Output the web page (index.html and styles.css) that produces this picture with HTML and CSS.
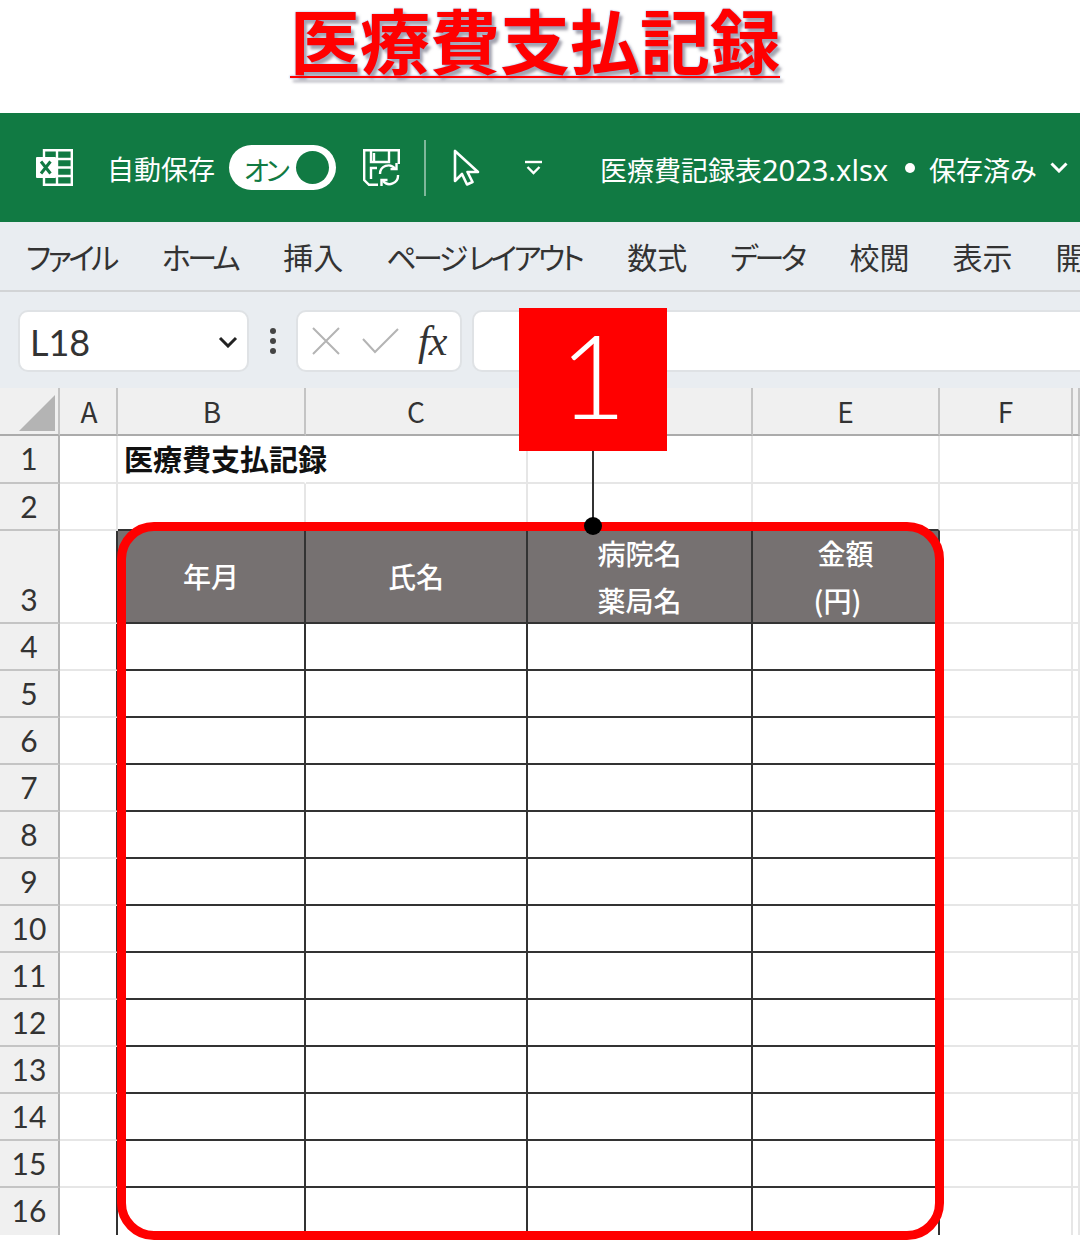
FILE: index.html
```html
<!DOCTYPE html>
<html lang="ja">
<head>
	<meta charset="UTF-8">
	<title>医療費支払記録</title>
	<link rel="stylesheet" href="styles.css">
</head>
<body>
	<div class="page">
		<h1 class="title"><span>医療費支払記録</span></h1>

		<div class="titlebar">
			<svg class="ico-excel" viewBox="0 0 37 37" fill="none" stroke="#fff" stroke-width="2.4">
				<path d="M8 8V1.2H35.8V35.8H8V28"/>
				<path d="M21 1.2V35.8M21 10H35.8M21 18.5H35.8M21 27H35.8"/>
				<rect x="0" y="8" width="20" height="21" rx="1" fill="#fff" stroke="none"/>
				<path d="M5 12.5L14.5 24.5M14.5 12.5L5 24.5" stroke="#117a43" stroke-width="3"/>
			</svg>
			<span class="autosave">自動保存</span>
			<div class="toggle">
				<span>オン</span>
				<i></i>
			</div>
			<svg class="ico-save" viewBox="0 0 37 37" fill="none" stroke="#fff" stroke-width="2.4">
				<path d="M15 35.8H6L1.2 31V1.2H35.8V15"/>
				<path d="M8 1.2V13H11V4M8 13H26V1.2M8 30V19H14"/>
				<path d="M17 25A8.5 8.5 0 0 1 32 19.5M35 26A8.5 8.5 0 0 1 20 32"/>
				<path d="M33.5 14V20H27.5M18.5 37V31H24.5"/>
			</svg>
			<div class="sep"></div>
			<svg class="ico-cursor" viewBox="0 0 27 37" fill="none" stroke="#fff" stroke-width="2.6" stroke-linejoin="round">
				<path d="M2 2V32L9 25L14 35.5L19.5 33L14.5 23H25Z"/>
			</svg>
			<svg class="ico-more" viewBox="0 0 17 15" fill="none" stroke="#fff" stroke-width="2.4">
				<path d="M0 2H17"/>
				<path d="M2.5 7L8.5 13L14.5 7"/>
			</svg>
			<span class="filename">医療費記録表<span class="ext">2023.xlsx</span></span>
			<i class="bullet"></i>
			<span class="saved">保存済み</span>
			<svg class="ico-down" viewBox="0 0 18 11" fill="none" stroke="#fff" stroke-width="3">
				<path d="M1.5 1.5L9 9L16.5 1.5"/>
			</svg>
		</div>

		<div class="tabs">
			<span class="kana">ファイル</span>
			<span class="kana">ホーム</span>
			<span>挿入</span>
			<span class="kana">ページ レイアウト</span>
			<span>数式</span>
			<span class="kana">データ</span>
			<span>校閲</span>
			<span>表示</span>
			<span>開発</span>
		</div>

		<div class="formulabar">
			<div class="namebox">
				<span>L18</span>
				<svg viewBox="0 0 20 12" fill="none" stroke="#222" stroke-width="3"><path d="M2 2L10 10L18 2"/></svg>
			</div>
			<div class="dots"><i></i><i></i><i></i></div>
			<div class="fxbox">
				<svg class="ico-x" viewBox="0 0 28 28" fill="none" stroke="#b4b4b4" stroke-width="2"><path d="M1 1L27 27M27 1L1 27"/></svg>
				<svg class="ico-check" viewBox="0 0 37 26" fill="none" stroke="#b4b4b4" stroke-width="2"><path d="M1 11L13 24L36 1"/></svg>
				<span class="fx">fx</span>
			</div>
			<div class="input"></div>
		</div>

		<div class="sheet">
			<div class="corner"><svg viewBox="0 0 36 36"><path d="M36 0V36H0Z" fill="#b4b4b4"/></svg></div>
			<div class="col nudge">A</div><div class="col nudge">B</div><div class="col">C</div><div class="col"></div><div class="col">E</div><div class="col">F</div><div class="col"></div>

			<div class="num">1</div><div class="c"></div><div class="c heading">医療費支払記録</div><div class="c"></div><div class="c"></div><div class="c"></div><div class="c"></div><div class="c"></div>
			<div class="num">2</div><div class="c"></div><div class="c b"></div><div class="c b"></div><div class="c b"></div><div class="c b"></div><div class="c"></div><div class="c"></div>
			<div class="num low">3</div><div class="c e"></div><div class="th">年月</div><div class="th">氏名</div><div class="th">病院名<br>薬局名</div><div class="th"><div>金額<br><span class="yen">(円)</span></div></div><div class="c"></div><div class="c"></div>
			<div class="num">4</div><div class="c e"></div><div class="t"></div><div class="t"></div><div class="t"></div><div class="t"></div><div class="c"></div><div class="c"></div>
			<div class="num">5</div><div class="c e"></div><div class="t"></div><div class="t"></div><div class="t"></div><div class="t"></div><div class="c"></div><div class="c"></div>
			<div class="num">6</div><div class="c e"></div><div class="t"></div><div class="t"></div><div class="t"></div><div class="t"></div><div class="c"></div><div class="c"></div>
			<div class="num">7</div><div class="c e"></div><div class="t"></div><div class="t"></div><div class="t"></div><div class="t"></div><div class="c"></div><div class="c"></div>
			<div class="num">8</div><div class="c e"></div><div class="t"></div><div class="t"></div><div class="t"></div><div class="t"></div><div class="c"></div><div class="c"></div>
			<div class="num">9</div><div class="c e"></div><div class="t"></div><div class="t"></div><div class="t"></div><div class="t"></div><div class="c"></div><div class="c"></div>
			<div class="num">10</div><div class="c e"></div><div class="t"></div><div class="t"></div><div class="t"></div><div class="t"></div><div class="c"></div><div class="c"></div>
			<div class="num">11</div><div class="c e"></div><div class="t"></div><div class="t"></div><div class="t"></div><div class="t"></div><div class="c"></div><div class="c"></div>
			<div class="num">12</div><div class="c e"></div><div class="t"></div><div class="t"></div><div class="t"></div><div class="t"></div><div class="c"></div><div class="c"></div>
			<div class="num">13</div><div class="c e"></div><div class="t"></div><div class="t"></div><div class="t"></div><div class="t"></div><div class="c"></div><div class="c"></div>
			<div class="num">14</div><div class="c e"></div><div class="t"></div><div class="t"></div><div class="t"></div><div class="t"></div><div class="c"></div><div class="c"></div>
			<div class="num">15</div><div class="c e"></div><div class="t"></div><div class="t"></div><div class="t"></div><div class="t"></div><div class="c"></div><div class="c"></div>
			<div class="num">16</div><div class="c e"></div><div class="t"></div><div class="t"></div><div class="t"></div><div class="t"></div><div class="c"></div><div class="c"></div>
		</div>

		<!-- annotations over the sheet -->
		<div class="redframe"></div>
		<div class="callout">1</div>
		<div class="leader"></div>
		<div class="leaderdot"></div>
	</div>
</body>
</html>
```

FILE: styles.css
```css
html, body {
	margin: 0;
	padding: 0;
	background: #fff;
}
.page {
	width: 1080px;
	height: 1240px;
	position: relative;
	overflow: hidden;
	font-family: "Noto Sans CJK JP", "Noto Sans", sans-serif;
	color: #333;
}

/* title */
.title {
	height: 113px;
	margin: 0;
	box-sizing: border-box;
	padding-left: 290px;
	font-size: 70px;
	line-height: 78px;
	font-weight: 700;
	color: #f00;
	white-space: nowrap;
	text-shadow: 0 0 2px #8fa6dc, 3px 4px 3px rgba(90, 90, 110, .55);
}
.title span {
	text-decoration: underline;
	text-decoration-thickness: 2px;
	text-underline-offset: 7px;
}

/* green bar */
.titlebar {
	height: 109px;
	background: #117a43;
	display: flex;
	align-items: center;
	color: #fff;
	font-size: 27px;
	white-space: nowrap;
}
.ico-excel {
	width: 37px;
	height: 37px;
	margin-left: 36px;
}
.autosave {
	margin-left: 34px;
	width: 108px;
	padding-top: 2px;
}
.toggle {
	width: 107px;
	height: 45px;
	margin-left: 14px;
	border-radius: 23px;
	background: #fff;
	color: #117a43;
	display: flex;
	align-items: center;
	justify-content: space-between;
	box-sizing: border-box;
	padding: 0 7px 0 15px;
}
.toggle span {
	font-size: 27px;
	line-height: 45px;
	font-feature-settings: "palt";
	letter-spacing: -3px;
	padding-top: 3px;
}
.toggle i {
	width: 33px;
	height: 33px;
	border-radius: 50%;
	background: #117a43;
}
.ico-save {
	width: 37px;
	height: 37px;
	margin-left: 27px;
}
.sep {
	width: 2px;
	height: 56px;
	margin-left: 24px;
	background: #7fb79a;
}
.ico-cursor {
	width: 27px;
	height: 37px;
	margin-left: 27px;
}
.ico-more {
	width: 17px;
	height: 15px;
	margin-left: 45px;
}
.filename {
	margin-left: 58px;
	width: 292px;
	padding-top: 3px;
}
.ext {
	font-family: "Noto Sans", sans-serif;
	font-size: 29px;
}
.bullet {
	width: 10px;
	height: 10px;
	margin-left: 13px;
	border-radius: 50%;
	background: #fff;
}
.saved {
	margin-left: 14px;
	width: 108px;
	padding-top: 3px;
}
.ico-down {
	width: 18px;
	height: 11px;
	margin-left: 13px;
}

/* ribbon tabs */
.tabs {
	height: 70px;
	box-sizing: border-box;
	background: #e9edf1;
	border-bottom: 2px solid #d2d4d6;
	display: flex;
	align-items: center;
	gap: 43px;
	padding-left: 26px;
	font-size: 30px;
	font-feature-settings: "palt";
	white-space: nowrap;
}
.kana {
	letter-spacing: -3.5px;
	margin-right: 3px;
}

/* formula bar */
.formulabar {
	height: 96px;
	box-sizing: border-box;
	background: #e9edf1;
	display: flex;
	align-items: flex-start;
	padding-top: 18px;
	padding-left: 18px;
}
.namebox, .fxbox, .input {
	height: 62px;
	box-sizing: border-box;
	background: #fff;
	border: 2px solid #dfe2e5;
	border-radius: 10px;
	display: flex;
	align-items: center;
}
.namebox {
	width: 231px;
	justify-content: space-between;
	padding: 2px 9px 0 10px;
	font-family: "Lato", "Noto Sans", sans-serif;
	font-size: 36px;
}
.namebox svg {
	width: 20px;
	height: 12px;
}
.dots {
	width: 47px;
	height: 62px;
	display: flex;
	flex-direction: column;
	align-items: center;
	justify-content: center;
	gap: 4px;
}
.dots i {
	width: 6px;
	height: 6px;
	border-radius: 50%;
	background: #444;
}
.fxbox {
	width: 166px;
	padding-left: 14px;
}
.ico-x {
	width: 28px;
	height: 28px;
}
.ico-check {
	width: 37px;
	height: 26px;
	margin-left: 22px;
}
.fx {
	margin-left: 19px;
	font-family: "Liberation Serif", serif;
	font-style: italic;
	font-size: 42px;
	line-height: 50px;
	color: #333;
	letter-spacing: -1px;
}
.input {
	flex: 1;
	margin-left: 10px;
	margin-right: -12px;
}

/* spreadsheet */
.sheet {
	display: grid;
	grid-template-columns: 60px 58px 188px 222px 225px 187px 133px 1fr;
	grid-template-rows: 48px 48px 47px 93px repeat(13, 47px);
	font-size: 28px;
}
.sheet > div {
	box-sizing: border-box;
}
.corner, .col {
	background: #f0f0f0;
	border-bottom: 2px solid #ababab;
	text-align: center;
	line-height: 46px;
}
.col {
	border-right: 2px solid #c4c4c4;
}
.nudge {
	padding-left: 2px;
}
.corner {
	border-right: 2px solid #c4c4c4;
	position: relative;
}
.corner svg {
	position: absolute;
	left: 19px;
	top: 7px;
	width: 36px;
	height: 36px;
}
.num {
	background: #f0f0f0;
	border-right: 2px solid #b4b4b4;
	border-bottom: 2px solid #c4c4c4;
	text-align: center;
	font-family: "Lato", "Noto Sans", sans-serif;
	font-size: 30px;
	line-height: 45px;
}
.num.low {
	padding-top: 46px;
}
.c {
	border-right: 2px solid #e6e6e6;
	border-bottom: 2px solid #e6e6e6;
}
.c.e {
	border-right-color: #333;
}
.c.b {
	border-bottom-color: #333;
}
.c.heading {
	border-right-color: transparent;
	padding-left: 6px;
	font-size: 29px;
	font-weight: 700;
	line-height: 44px;
	color: #111;
	white-space: nowrap;
}
.t, .th {
	border-right: 2px solid #333;
	border-bottom: 2px solid #333;
}
.th {
	background: #767171;
	color: #fff;
	font-size: 28px;
	font-weight: 500;
	line-height: 47px;
	text-align: center;
	display: flex;
	align-items: center;
	justify-content: center;
}
.yen {
	display: inline-block;
	margin-right: 16px;
}
.sheet > :nth-last-child(-n+8) {
	border-bottom: 0;
}

/* annotations */
.redframe {
	position: absolute;
	left: 117px;
	top: 522px;
	width: 827px;
	height: 718px;
	box-sizing: border-box;
	border: 9px solid #f00;
	border-radius: 37px;
}
.callout {
	position: absolute;
	left: 519px;
	top: 308px;
	width: 148px;
	height: 143px;
	background: #f00;
	color: #fff;
	font-family: "Lato", "Noto Sans", sans-serif;
	font-weight: 300;
	font-size: 116px;
	line-height: 133px;
	text-align: center;
}
.leader {
	position: absolute;
	left: 592px;
	top: 451px;
	width: 2px;
	height: 72px;
	background: #333;
}
.leaderdot {
	position: absolute;
	left: 584px;
	top: 517px;
	width: 18px;
	height: 18px;
	border-radius: 50%;
	background: #000;
}
```
